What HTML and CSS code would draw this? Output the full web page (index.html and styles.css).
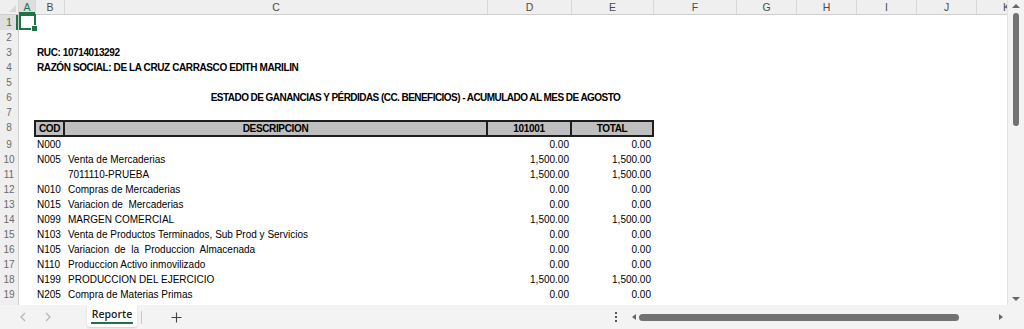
FILE: index.html
```html
<!DOCTYPE html>
<html lang="es">
<head>
    <meta charset="utf-8">
    <title>Reporte</title>
    <link rel="stylesheet" href="styles.css">
</head>
<body>
<div class="excel">
    <div class="main">
        <div class="sheet">
            <div class="row colhead">
                <div class="corner"></div>
                <div class="ch active">A</div>
                <div class="ch">B</div>
                <div class="ch">C</div>
                <div class="ch">D</div>
                <div class="ch">E</div>
                <div class="ch">F</div>
                <div class="ch">G</div>
                <div class="ch">H</div>
                <div class="ch">I</div>
                <div class="ch">J</div>
                <div class="ch">K</div>
            </div>
            <div class="row"><div class="rh active">1</div><div class="cell cA selected"></div></div>
            <div class="row"><div class="rh">2</div></div>
            <div class="row"><div class="rh">3</div><div class="cell cB bold span3">RUC: 10714013292</div></div>
            <div class="row"><div class="rh">4</div><div class="cell cB bold span3">RAZÓN SOCIAL: DE LA CRUZ CARRASCO EDITH MARILIN</div></div>
            <div class="row"><div class="rh">5</div></div>
            <div class="row"><div class="rh">6</div><div class="cell cB bold title center span6">ESTADO DE GANANCIAS Y PÉRDIDAS (CC. BENEFICIOS) - ACUMULADO AL MES DE AGOSTO</div></div>
            <div class="row"><div class="rh">7</div></div>
            <div class="row thead">
                <div class="rh">8</div>
                <div class="cell cB th first">COD</div>
                <div class="cell cC th">DESCRIPCION</div>
                <div class="cell cD th">101001</div>
                <div class="cell cE th">TOTAL</div>
            </div>
            <div class="row"><div class="rh">9</div><div class="cell cB">N000</div><div class="cell cD num">0.00</div><div class="cell cE num">0.00</div></div>
            <div class="row"><div class="rh">10</div><div class="cell cB">N005</div><div class="cell cC">Venta de Mercaderias</div><div class="cell cD num">1,500.00</div><div class="cell cE num">1,500.00</div></div>
            <div class="row"><div class="rh">11</div><div class="cell cC">7011110-PRUEBA</div><div class="cell cD num">1,500.00</div><div class="cell cE num">1,500.00</div></div>
            <div class="row"><div class="rh">12</div><div class="cell cB">N010</div><div class="cell cC">Compras de Mercaderias</div><div class="cell cD num">0.00</div><div class="cell cE num">0.00</div></div>
            <div class="row"><div class="rh">13</div><div class="cell cB">N015</div><div class="cell cC">Variacion de  Mercaderias</div><div class="cell cD num">0.00</div><div class="cell cE num">0.00</div></div>
            <div class="row"><div class="rh">14</div><div class="cell cB">N099</div><div class="cell cC">MARGEN COMERCIAL</div><div class="cell cD num">1,500.00</div><div class="cell cE num">1,500.00</div></div>
            <div class="row"><div class="rh">15</div><div class="cell cB">N103</div><div class="cell cC">Venta de Productos Terminados, Sub Prod y Servicios</div><div class="cell cD num">0.00</div><div class="cell cE num">0.00</div></div>
            <div class="row"><div class="rh">16</div><div class="cell cB">N105</div><div class="cell cC">Variacion  de  la  Produccion  Almacenada</div><div class="cell cD num">0.00</div><div class="cell cE num">0.00</div></div>
            <div class="row"><div class="rh">17</div><div class="cell cB">N110</div><div class="cell cC">Produccion Activo inmovilizado</div><div class="cell cD num">0.00</div><div class="cell cE num">0.00</div></div>
            <div class="row"><div class="rh">18</div><div class="cell cB">N199</div><div class="cell cC">PRODUCCION DEL EJERCICIO</div><div class="cell cD num">1,500.00</div><div class="cell cE num">1,500.00</div></div>
            <div class="row"><div class="rh">19</div><div class="cell cB">N205</div><div class="cell cC">Compra de Materias Primas</div><div class="cell cD num">0.00</div><div class="cell cE num">0.00</div></div>
            <div class="row"><div class="rh"></div></div>
        </div>
        <div class="vscroll">
            <span class="tri up"></span>
            <div class="vthumb"></div>
            <span class="tri down"></span>
        </div>
    </div>
    <div class="bottombar">
        <div class="nav">
            <svg width="8" height="10" viewBox="0 0 8 10"><path d="M6 1 L2 5 L6 9" fill="none" stroke="#b3b3b3" stroke-width="1.2"/></svg>
            <svg width="8" height="10" viewBox="0 0 8 10"><path d="M2 1 L6 5 L2 9" fill="none" stroke="#b3b3b3" stroke-width="1.2"/></svg>
        </div>
        <div class="tab"><span>Reporte</span></div>
        <div class="tab-sep"></div>
        <div class="add">
            <svg width="11" height="11" viewBox="0 0 11 11"><path d="M5.5 0.5 V10.5 M0.5 5.5 H10.5" stroke="#444" stroke-width="1.1"/></svg>
        </div>
        <div class="hbar">
            <div class="dots"><i></i><i></i><i></i></div>
            <span class="tri left"></span>
            <div class="hthumb"></div>
            <span class="tri right"></span>
        </div>
    </div>
</div>
</body>
</html>
```

FILE: styles.css
```css
body {
    margin: 0;
    padding: 0;
    background-color: #fff;
    font-family: "Liberation Sans", Arial, sans-serif;
    color: #000;
}
.excel {
    width: 1024px;
    height: 329px;
    display: flex;
    flex-direction: column;
    overflow: hidden;
}
.main {
    display: flex;
    height: 305px;
}
.sheet {
    width: 1007px;
    overflow: hidden;
    background-color: #fff;
}
.row {
    display: grid;
    grid-template-columns: 19px 17px 29px 423px 84px 82px 83px 60px 60px 60px 60px 60px;
    height: 15px;
}
.colhead {
    background-color: #efefef;
    border-bottom: 1px solid #cfcfcf;
    box-sizing: border-box;
}
.corner {
    position: relative;
    border-right: 1px solid #d4d4d4;
}
.corner::after {
    content: "";
    position: absolute;
    right: 2px;
    bottom: 2px;
    border-left: 7px solid transparent;
    border-bottom: 7px solid #d8d8d8;
}
.ch {
    border-right: 1px solid #d8d8d8;
    font-size: 10.5px;
    line-height: 14px;
    text-align: center;
    color: #4a4a4a;
}
.ch.active {
    background-color: #dedede;
    color: #217346;
    box-shadow: inset 0 -2px 0 #217346;
}
.rh {
    grid-column: 1;
    background-color: #efefef;
    border-right: 1px solid #cfcfcf;
    font-size: 10px;
    line-height: 15px;
    text-align: center;
    color: #6a6a6a;
}
.rh.active {
    background-color: #dedede;
    color: #217346;
    box-shadow: inset -2px 0 0 #217346;
}
.cell {
    font-size: 10px;
    line-height: 15px;
    padding: 0 3px 0 1px;
    white-space: pre;
    overflow: visible;
}
.cA { grid-column: 2; }
.cB { grid-column: 3; }
.cC { grid-column: 4; padding-left: 3px; }
.cD { grid-column: 5; }
.cE { grid-column: 6; }
.span3 { grid-column: 3 / span 3; }
.span6 { grid-column: 3 / span 6; }
.bold {
    font-weight: bold;
    letter-spacing: -0.4px;
}
.title {
    letter-spacing: -0.55px;
}
.center {
    text-align: center;
}
.num {
    text-align: right;
}
.selected {
    position: relative;
    box-shadow: inset 0 0 0 2px #217346;
    margin: -1px 0 0 0;
}
.selected::after {
    content: "";
    position: absolute;
    right: -2px;
    bottom: -2px;
    width: 5px;
    height: 5px;
    background-color: #217346;
    border: 1px solid #fff;
}
.thead {
    height: 17px;
}
.th {
    background-color: #bfbfbf;
    border-top: 2px solid #1e1e1e;
    border-bottom: 2px solid #1e1e1e;
    border-right: 2px solid #1e1e1e;
    box-sizing: border-box;
    font-weight: bold;
    letter-spacing: -0.35px;
    line-height: 13px;
    text-align: center;
    padding: 0;
}
.th.first {
    border-left: 2px solid #1e1e1e;
    margin-left: -2px;
}
.vscroll {
    width: 17px;
    background-color: #f3f3f3;
    border-left: 1px solid #e2e2e2;
    box-sizing: border-box;
    display: flex;
    flex-direction: column;
    align-items: center;
}
.vthumb {
    width: 6px;
    height: 113px;
    margin-top: 5px;
    background-color: #727272;
    border-radius: 3px;
}
.tri {
    display: block;
    width: 0;
    height: 0;
}
.tri.up {
    margin-top: 4px;
    border-left: 4px solid transparent;
    border-right: 4px solid transparent;
    border-bottom: 4px solid #666;
}
.tri.down {
    margin-top: auto;
    margin-bottom: 4px;
    border-left: 4px solid transparent;
    border-right: 4px solid transparent;
    border-top: 4px solid #666;
}
.bottombar {
    height: 24px;
    background-color: #f3f3f3;
    display: flex;
    align-items: center;
}
.nav {
    width: 87px;
    display: flex;
    align-items: center;
    gap: 17px;
    padding-left: 19px;
    box-sizing: border-box;
}
.tab {
    width: 50px;
    height: 22px;
    align-self: flex-start;
    background-color: #fff;
    box-shadow: 0 1px 2px rgba(0, 0, 0, 0.15);
    border-radius: 0 0 3px 3px;
    display: flex;
    justify-content: center;
    font-family: "Open Sans", sans-serif;
    font-size: 10.5px;
    font-weight: 600;
    color: #222;
}
.tab span {
    line-height: 18px;
    height: 17px;
    border-bottom: 2px solid #217346;
    padding: 0 1px;
}
.tab-sep {
    width: 1px;
    height: 13px;
    margin-left: 4px;
    background-color: #c8c8c8;
}
.add {
    margin-left: 29px;
    display: flex;
}
.hbar {
    margin-left: auto;
    width: 414px;
    display: flex;
    align-items: center;
}
.dots {
    width: 12px;
    display: flex;
    flex-direction: column;
    align-items: center;
    gap: 2px;
}
.dots i {
    width: 2px;
    height: 2px;
    background-color: #555;
}
.tri.left {
    margin-left: 10px;
    border-top: 3.5px solid transparent;
    border-bottom: 3.5px solid transparent;
    border-right: 4px solid #666;
}
.tri.right {
    margin-left: 40px;
    border-top: 3.5px solid transparent;
    border-bottom: 3.5px solid transparent;
    border-left: 4px solid #666;
}
.hthumb {
    width: 320px;
    height: 7px;
    margin-left: 3px;
    background-color: #727272;
    border-radius: 4px;
}
```
